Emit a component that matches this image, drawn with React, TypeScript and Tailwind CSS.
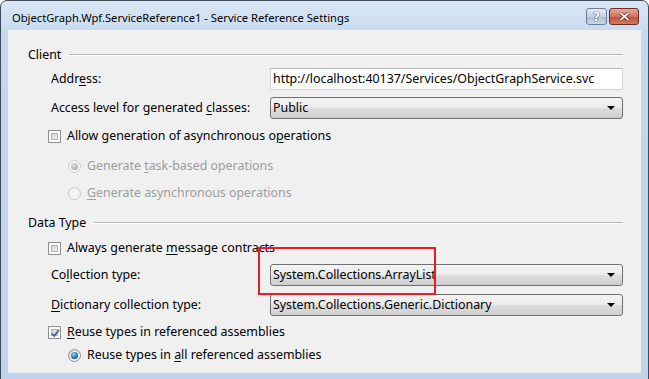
import type { ReactNode } from 'react';

const font = "font-['Noto_Sans',sans-serif]";

function U({ children }: { children: ReactNode }) {
  return <span className="underline decoration-1 underline-offset-2">{children}</span>;
}

function GroupHeader({ title }: { title: string }) {
  return (
    <div className="flex h-[22px] items-center pl-[20px] pr-[18px]">
      <span className="mr-[8px]">{title}</span>
      <div className="h-[2px] flex-1 border-t border-t-[#b4b4b4] border-b border-b-white" />
    </div>
  );
}

function Combo({ value }: { value: string }) {
  return (
    <div className="flex h-[22px] w-[353px] items-center justify-between rounded-[3px] border border-[#707070] bg-[linear-gradient(#f3f3f3_0%,#ebebeb_50%,#dddddd_51%,#cfcfcf_100%)] pl-[2px] pr-[7px]">
      <span>{value}</span>
      <svg width="8" height="4" viewBox="0 0 8 4">
        <path d="M0 0h8L4 4z" fill="#000" />
      </svg>
    </div>
  );
}

function Checkbox({ checked }: { checked?: boolean }) {
  return (
    <div className="relative h-[13px] w-[13px] border border-[#8e8f8f] bg-white p-[2px]">
      <div className="h-full w-full border border-[#aeb3b9] bg-[linear-gradient(135deg,#cbcfd5,#f6f6f6)]" />
      {checked ? (
        <svg className="absolute left-[1px] top-[1px]" width="11" height="11" viewBox="0 0 11 11">
          <path d="M2 5.5l2.2 2.6L9 1.8" fill="none" stroke="#4a5f97" strokeWidth="1.8" />
        </svg>
      ) : null}
    </div>
  );
}

function Radio({ checked, disabled }: { checked?: boolean; disabled?: boolean }) {
  return (
    <div
      className={
        'flex h-[13px] w-[13px] items-center justify-center rounded-full border ' +
        (disabled ? 'border-[#c9c9c9] bg-[#f4f4f4]' : 'border-[#8e8f8f] bg-[linear-gradient(135deg,#d4d6d9,#ffffff)]')
      }
    >
      {checked ? (
        <div
          className={
            'h-[7px] w-[7px] rounded-full ' +
            (disabled
              ? 'bg-[radial-gradient(circle_at_40%_35%,#e0e0e0,#9a9a9a)]'
              : 'bg-[radial-gradient(circle_at_40%_35%,#8fd8ff,#1b6fb0_60%,#0f3f6e)]')
          }
        />
      ) : null}
    </div>
  );
}

function FieldRow({ label, children, mt }: { label: ReactNode; children: ReactNode; mt: string }) {
  return (
    <div className={'flex h-[22px] items-center pl-[43px] ' + mt}>
      <div className="w-[219px]">{label}</div>
      {children}
    </div>
  );
}

function CheckRow({ checked, children, mt }: { checked?: boolean; children: ReactNode; mt: string }) {
  return (
    <div className={'flex h-[22px] items-center pl-[40px] ' + mt}>
      <Checkbox checked={checked} />
      <span className="ml-[6px]">{children}</span>
    </div>
  );
}

function RadioRow({ checked, disabled, children, mt }: { checked?: boolean; disabled?: boolean; children: ReactNode; mt: string }) {
  return (
    <div className={'flex h-[22px] items-center pl-[60px] ' + mt + (disabled ? ' text-[#9d9d9d]' : '')}>
      <Radio checked={checked} disabled={disabled} />
      <span className="ml-[6px]">{children}</span>
    </div>
  );
}

export default function App() {
  return (
    <div className={'relative h-[379px] w-[649px] overflow-hidden bg-white text-[12.4px] text-black ' + font}>
      <div className="flex h-[390px] w-[649px] flex-col rounded-t-[7px] border border-[#3f4a57] bg-[linear-gradient(#d9e7f6,#c3d8ee_40px,#bfd4ec)]">
        <div className="flex h-[29px] items-center justify-between pl-[11px] pr-[9px] pt-[5px]">
          <span className="text-[11.2px]">ObjectGraph.Wpf.ServiceReference1 - Service Reference Settings</span>
          <div className="-mt-[3px] flex items-center gap-[2px]">
            <div className="flex h-[17px] w-[21px] items-center justify-center rounded-[3px] border border-[#6f7d92] bg-[linear-gradient(#e3ecf7,#c3d3e6_50%,#a9bed8_51%,#c7d8ec)]">
              <span className="font-['DejaVu_Sans',sans-serif] text-[12px] font-bold leading-none text-white [text-shadow:0_0_1px_#2b3a55,0_0_1px_#2b3a55]">?</span>
            </div>
            <div className="flex h-[17px] w-[30px] items-center justify-center rounded-[3px] border border-[#6b2d27] bg-[linear-gradient(#e9a99c,#d2735f_50%,#c04d33_51%,#d47a5e)]">
              <svg width="11" height="9" viewBox="0 0 11 9">
                <path d="M1.5 1L9.5 8M9.5 1L1.5 8" stroke="#3d1a14" strokeWidth="3" />
                <path d="M1.5 1L9.5 8M9.5 1L1.5 8" stroke="#fff" strokeWidth="1.7" />
              </svg>
            </div>
          </div>
        </div>
        <div className="mx-[7px] h-[343px] bg-[#f0f0f0] pt-[14px]">
          <GroupHeader title="Client" />
          <FieldRow
            mt="mt-[2px]"
            label={
              <>
                Addr<U>e</U>ss:
              </>
            }
          >
            <div className="flex h-[22px] w-[353px] items-center border border-[#d3d6db] border-t-[#b5b9bf] bg-white pl-[2px]">
              http://localhost:40137/Services/ObjectGraphService.svc
            </div>
          </FieldRow>
          <FieldRow
            mt="mt-[7px]"
            label={
              <>
                Access level for generated <U>c</U>lasses:
              </>
            }
          >
            <Combo value="Public" />
          </FieldRow>
          <CheckRow mt="mt-[6px]">
            Allow generation of asynchronous o<U>p</U>erations
          </CheckRow>
          <RadioRow mt="mt-[8px]" checked disabled>
            Generate <U>t</U>ask-based operations
          </RadioRow>
          <RadioRow mt="mt-[5px]" disabled>
            <U>G</U>enerate asynchronous operations
          </RadioRow>
          <div className="mt-[8px]">
            <GroupHeader title="Data Type" />
          </div>
          <CheckRow mt="mt-[3px]">
            Always generate <U>m</U>essage contracts
          </CheckRow>
          <FieldRow
            mt="mt-[5px]"
            label={
              <>
                Co<U>l</U>lection type:
              </>
            }
          >
            <Combo value="System.Collections.ArrayList" />
          </FieldRow>
          <FieldRow
            mt="mt-[8px]"
            label={
              <>
                <U>D</U>ictionary collection type:
              </>
            }
          >
            <Combo value="System.Collections.Generic.Dictionary" />
          </FieldRow>
          <CheckRow mt="mt-[5px]" checked>
            <U>R</U>euse types in referenced assemblies
          </CheckRow>
          <RadioRow mt="mt-[1px]" checked>
            Reuse types in <U>a</U>ll referenced assemblies
          </RadioRow>
        </div>
      </div>
      <div className="absolute left-[258px] top-[247px] h-[48px] w-[178px] border-2 border-[#ed1c24]" />
    </div>
  );
}
